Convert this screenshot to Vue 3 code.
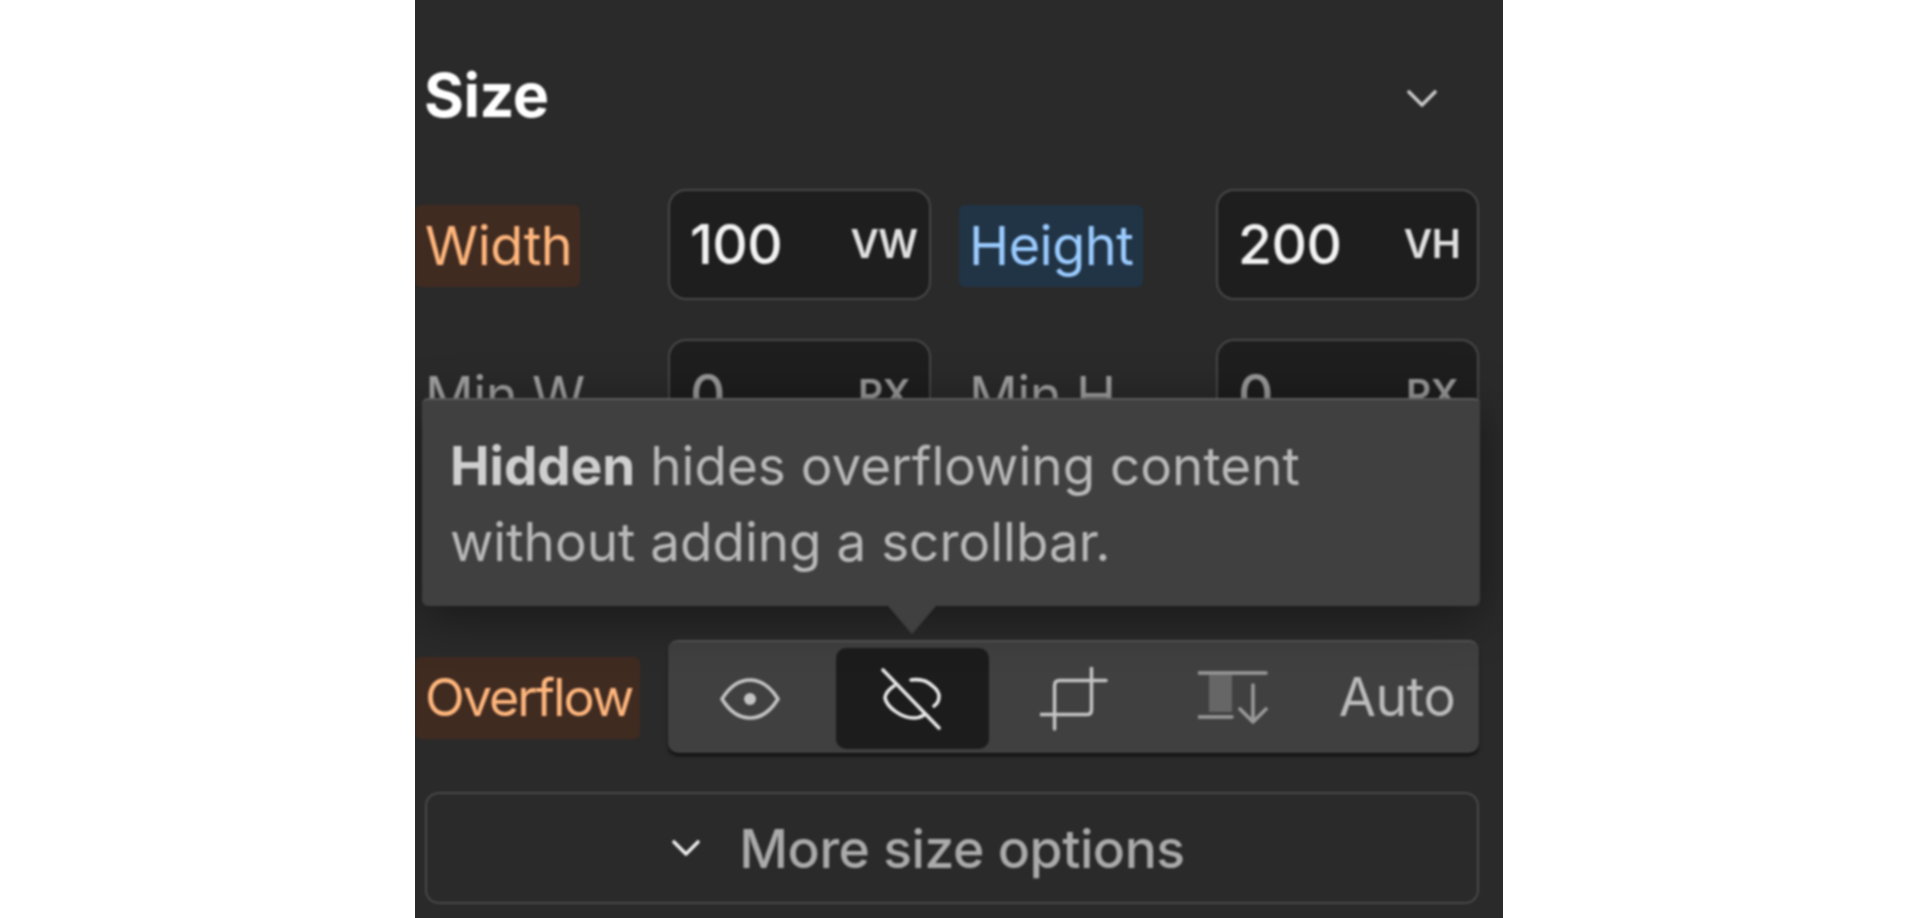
<script setup>
const fields = [
  { label: 'Width', value: '100', unit: 'VW', tone: 'orange' },
  { label: 'Height', value: '200', unit: 'VH', tone: 'blue' },
  { label: 'Min W', value: '0', unit: 'PX', tone: 'plain' },
  { label: 'Min H', value: '0', unit: 'PX', tone: 'plain' },
]
</script>

<template>
  <div class="panel">
    <div class="content">
      <header class="head">
        <h2>Size</h2>
        <svg class="chevron" width="30" height="20" viewBox="0 0 30 20"><path d="M2 3l13 13L28 3" /></svg>
      </header>

      <div class="grid">
        <template v-for="f in fields" :key="f.label">
          <div class="cell-label"><span class="tag" :class="f.tone">{{ f.label }}</span></div>
          <div class="input" :class="{ muted: f.tone === 'plain' }">
            <span class="val">{{ f.value }}</span>
            <span class="unit">{{ f.unit }}</span>
          </div>
        </template>
      </div>

      <div class="overflow-row">
        <div class="cell-label"><span class="tag orange tight">Overflow</span></div>
        <div class="segments">
          <button class="seg">
            <svg width="60" height="44" viewBox="0 0 60 44">
              <path d="M2 22C10 9 19 3 30 3s20 6 28 19c-8 13-17 19-28 19S10 35 2 22z" />
              <circle cx="30" cy="22" r="6" class="dot" />
            </svg>
          </button>
          <button class="seg active">
            <svg width="60" height="62" viewBox="0 0 60 62">
              <path d="M2 2l56 58" />
              <path d="M13 18C8 21 4 26 4 30c2 9 16 20 29 20 4 0 7-1 10-3" />
              <path d="M30 12c5-1 10 0 14 1 7 3 14 10 14 15 0 4-2 8-5 10" />
            </svg>
          </button>
          <button class="seg">
            <svg width="68" height="64" viewBox="0 0 70 64">
              <path d="M53 0v43q0 5-5 5H0" />
              <path d="M68 13H20q-5 0-5 5v45" />
            </svg>
          </button>
          <button class="seg">
            <svg width="70" height="58" viewBox="0 0 70 58">
              <rect x="11" y="5" width="23" height="37" class="bar" />
              <path d="M0 3h68M0 47h34" />
              <path d="M55 15v37M42 39l13 13 13-13" />
            </svg>
          </button>
          <button class="seg auto">Auto</button>
        </div>
      </div>

      <button class="more">
        <svg width="30" height="20" viewBox="0 0 30 20"><path d="M3 4l12 12L27 4" /></svg>
        More size options
      </button>

      <div class="tooltip">
        <p><b>Hidden</b> hides overflowing content without adding a scrollbar.</p>
      </div>
    </div>
  </div>
</template>

<style>
html, body {
  margin: 0;
  background: #fff;
}
</style>

<style scoped>
.panel {
  width: 1088px;
  height: 918px;
  margin-left: 415px;
  overflow: hidden;
  background: #2a2a2a;
  font-family: Inter, "Noto Sans", sans-serif;
}

.content {
  position: relative;
  box-sizing: border-box;
  height: 100%;
  padding-right: 24px;
  filter: blur(0.9px);
}

.head {
  display: flex;
  align-items: center;
  justify-content: space-between;
  height: 189px;
  padding: 0 42px 0 9px;
  box-sizing: border-box;
}

.head h2 {
  margin: 0;
  font-size: 61px;
  font-weight: 700;
  color: #fff;
  letter-spacing: -0.5px;
}

svg {
  display: block;
  fill: none;
  stroke: currentColor;
  stroke-width: 3.6;
  stroke-linecap: round;
  stroke-linejoin: round;
}

.chevron {
  color: #c9c9c9;
  margin-top: 8px;
}

.grid {
  display: grid;
  grid-template-columns: 253px 263px 285px 263px;
  grid-auto-rows: 111px;
  row-gap: 39px;
}

.cell-label {
  display: flex;
  align-items: center;
  padding-top: 2px;
}

.grid .cell-label:nth-child(4n + 3) {
  padding-left: 28px;
}

.tag {
  display: flex;
  align-items: center;
  height: 82px;
  line-height: 60px;
  padding: 0 8px 0 10px;
  border-radius: 6px;
  font-size: 54px;
  letter-spacing: -0.5px;
  color: #a0a0a0;
}

.tag.orange {
  background: #402b21;
  color: #ffb67c;
}

.tag.blue {
  padding-right: 10px;
  background: #213446;
  color: #9acbff;
}

.tag.tight {
  font-size: 52px;
  letter-spacing: -2px;
}

.input {
  display: flex;
  align-items: center;
  justify-content: space-between;
  box-sizing: border-box;
  padding: 0 10px 2px 20px;
  background: #1e1e1e;
  border: 2px solid #484848;
  border-radius: 18px;
  color: #f2f2f2;
}

.val {
  font-size: 55px;
  font-weight: 500;
  letter-spacing: -0.5px;
}

.unit {
  width: 70px;
  text-align: center;
  white-space: nowrap;
  font-size: 39px;
  font-weight: 600;
  letter-spacing: -0.5px;
  color: #e0e0e0;
}

.input.muted .val,
.input.muted .unit {
  color: #999;
}

.overflow-row {
  display: grid;
  grid-template-columns: 253px 1fr;
  height: 113px;
  margin-top: 190px;
}

.segments {
  display: flex;
  align-items: center;
  box-sizing: border-box;
  padding: 6px 0 4px;
  background: #404040;
  border-top: 2px solid #555;
  border-radius: 10px;
  box-shadow: 0 3px 3px #111;
}

.seg {
  display: flex;
  align-items: center;
  justify-content: center;
  width: 153px;
  height: 100%;
  padding: 0;
  border: 0;
  border-radius: 10px;
  background: none;
  font: inherit;
  color: #c4c4c4;
}

.seg:first-child {
  width: 168px;
  padding-right: 5px;
}

.seg.active {
  padding-right: 4px;
  background: #1c1c1c;
  color: #e8e8e8;
}

.seg:nth-child(3) {
  width: 170px;
}

.seg:nth-child(4) {
  width: 156px;
  padding-right: 8px;
  color: #999;
}

.seg .dot {
  fill: currentColor;
  stroke: none;
}

.seg .bar {
  fill: #666;
  stroke: none;
}

.seg.auto {
  flex: 1;
  padding-bottom: 4px;
  font-size: 54px;
  letter-spacing: -0.5px;
  color: #bbb;
}

.more {
  display: flex;
  align-items: center;
  justify-content: center;
  gap: 38px;
  box-sizing: border-box;
  width: 1054px;
  height: 112px;
  margin: 39px 0 0 10px;
  padding: 0 48px 0 0;
  background: none;
  border: 2px solid #484848;
  border-radius: 14px;
  font: inherit;
  font-size: 53.5px;
  font-weight: 500;
  letter-spacing: -0.5px;
  color: #aaa;
}

.more svg {
  color: #eee;
}

.tooltip {
  position: absolute;
  left: 7px;
  top: 398px;
  box-sizing: border-box;
  width: 1058px;
  height: 208px;
  padding: 28px 28px 0;
  background: #404040;
  border-top: 2px solid #5c5c5c;
  border-radius: 6px;
  box-shadow: 0 10px 50px rgba(0, 0, 0, 0.45);
  color: #b8b8b8;
  font-size: 53px;
  line-height: 76px;
}

.tooltip p {
  margin: 0;
  max-width: 900px;
}

.tooltip b {
  font-weight: 700;
  color: #cfcfcf;
}

.tooltip::after {
  content: "";
  position: absolute;
  left: 466px;
  top: 100%;
  border: 24px solid transparent;
  border-top: 28px solid #404040;
  border-bottom-width: 0;
}
</style>
